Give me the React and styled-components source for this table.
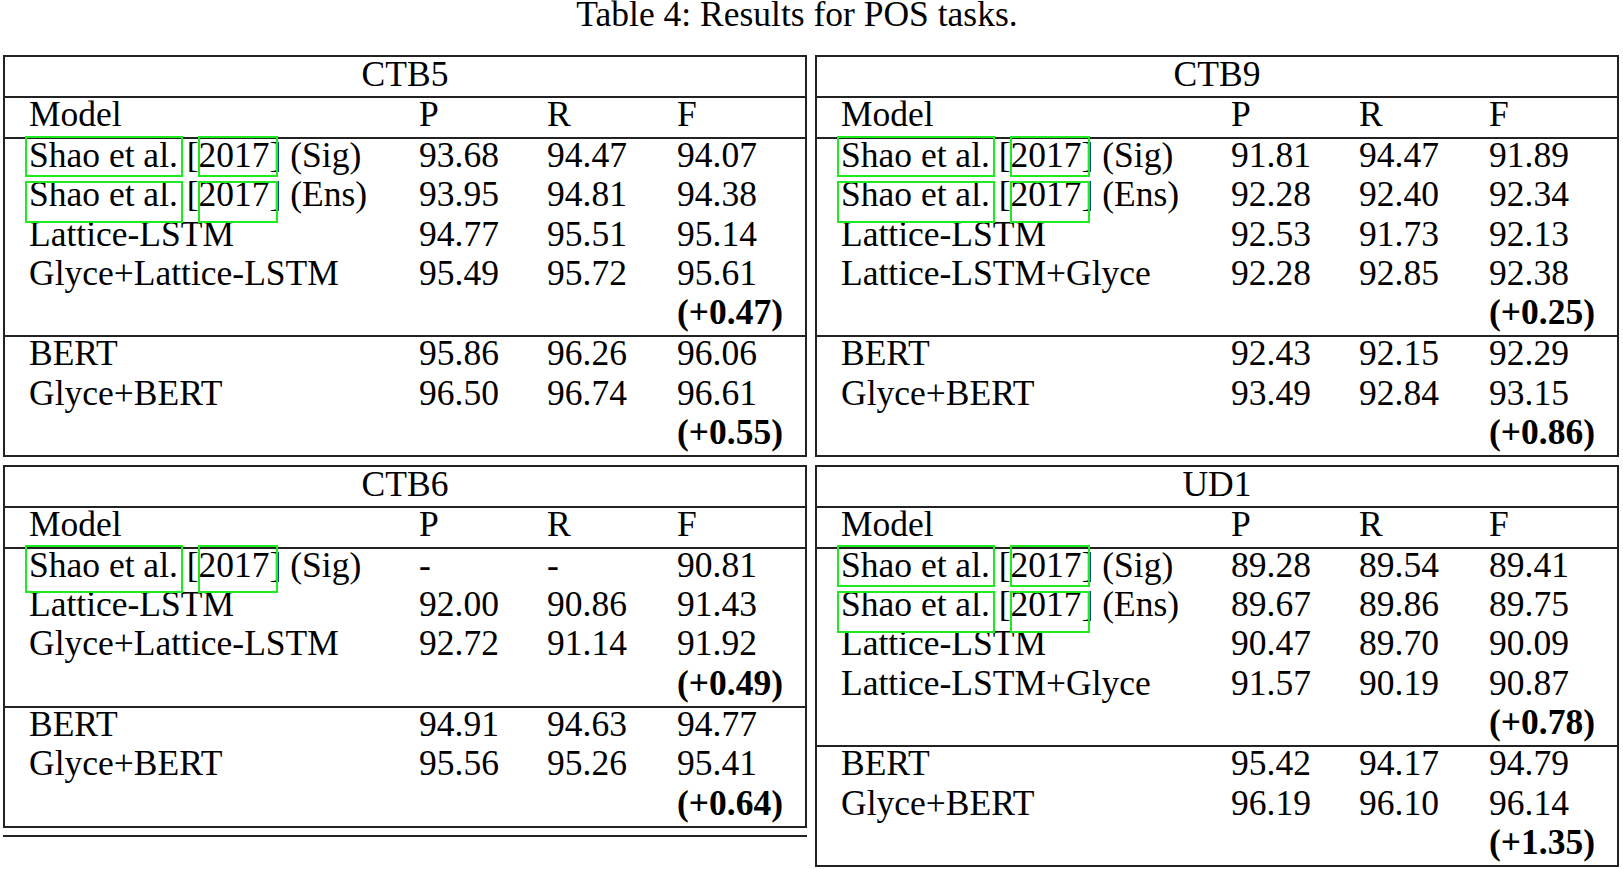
import styled, { createGlobalStyle, css } from 'styled-components';

const GlobalStyle = createGlobalStyle`
  body {
    margin: 0;
    background: #fff;
    color: #000;
    font-family: "Liberation Serif", "Times New Roman", serif;
  }
`;

// link annotation box offsets, relative to the inline content area
const linkRows = {
  first: { top: 0.5, bottom: -1.7 },
  second: { top: 6.9, bottom: -8.4 },
  single: { top: 0.5, bottom: -7.7 },
};
const linkSides = {
  name: { left: -4, right: -5.3 },
  year: { left: -0.5, right: -8.8 },
};

const tables = [
  {
    title: 'CTB5',
    groups: [
      [
        { cite: 'Sig', link: 'first', p: '93.68', r: '94.47', f: '94.07' },
        { cite: 'Ens', link: 'second', p: '93.95', r: '94.81', f: '94.38' },
        { model: 'Lattice-LSTM', p: '94.77', r: '95.51', f: '95.14' },
        { model: 'Glyce+Lattice-LSTM', p: '95.49', r: '95.72', f: '95.61' },
        { gain: '(+0.47)' },
      ],
      [
        { model: 'BERT', p: '95.86', r: '96.26', f: '96.06' },
        { model: 'Glyce+BERT', p: '96.50', r: '96.74', f: '96.61' },
        { gain: '(+0.55)' },
      ],
    ],
  },
  {
    title: 'CTB9',
    groups: [
      [
        { cite: 'Sig', link: 'first', p: '91.81', r: '94.47', f: '91.89' },
        { cite: 'Ens', link: 'second', p: '92.28', r: '92.40', f: '92.34' },
        { model: 'Lattice-LSTM', p: '92.53', r: '91.73', f: '92.13' },
        { model: 'Lattice-LSTM+Glyce', p: '92.28', r: '92.85', f: '92.38' },
        { gain: '(+0.25)' },
      ],
      [
        { model: 'BERT', p: '92.43', r: '92.15', f: '92.29' },
        { model: 'Glyce+BERT', p: '93.49', r: '92.84', f: '93.15' },
        { gain: '(+0.86)' },
      ],
    ],
  },
  {
    title: 'CTB6',
    rule: true,
    groups: [
      [
        { cite: 'Sig', link: 'single', p: '-', r: '-', f: '90.81' },
        { model: 'Lattice-LSTM', p: '92.00', r: '90.86', f: '91.43' },
        { model: 'Glyce+Lattice-LSTM', p: '92.72', r: '91.14', f: '91.92' },
        { gain: '(+0.49)' },
      ],
      [
        { model: 'BERT', p: '94.91', r: '94.63', f: '94.77' },
        { model: 'Glyce+BERT', p: '95.56', r: '95.26', f: '95.41' },
        { gain: '(+0.64)' },
      ],
    ],
  },
  {
    title: 'UD1',
    groups: [
      [
        { cite: 'Sig', link: 'first', p: '89.28', r: '89.54', f: '89.41' },
        { cite: 'Ens', link: 'second', p: '89.67', r: '89.86', f: '89.75' },
        { model: 'Lattice-LSTM', p: '90.47', r: '89.70', f: '90.09' },
        { model: 'Lattice-LSTM+Glyce', p: '91.57', r: '90.19', f: '90.87' },
        { gain: '(+0.78)' },
      ],
      [
        { model: 'BERT', p: '95.42', r: '94.17', f: '94.79' },
        { model: 'Glyce+BERT', p: '96.19', r: '96.10', f: '96.14' },
        { gain: '(+1.35)' },
      ],
    ],
  },
];

const ModelName = ({ row }) => {
  if (!row.cite) return row.model || '';
  return (
    <>
      <Link $row={row.link} $side="name">Shao et al.</Link> [
      <Link $row={row.link} $side="year">2017</Link>] ({row.cite})
    </>
  );
};

const ResultTable = ({ table }) => (
  <Block>
    <Box>
      <TitleRow>{table.title}</TitleRow>
      <Row $head>
        <Cell>Model</Cell>
        <Cell>P</Cell>
        <Cell>R</Cell>
        <Cell>F</Cell>
      </Row>
      {table.groups.map((group, gi) => (
        <Group key={gi} $first={gi === 0}>
          {group.map((row, ri) => (
            <Row key={ri}>
              <Cell><ModelName row={row} /></Cell>
              <Cell>{row.p}</Cell>
              <Cell>{row.r}</Cell>
              <Cell $bold={!!row.gain}>{row.gain || row.f}</Cell>
            </Row>
          ))}
        </Group>
      ))}
    </Box>
    {table.rule && <Rule />}
  </Block>
);

const App = () => (
  <Page>
    <GlobalStyle />
    <Caption>Table 4: Results for POS tasks.</Caption>
    <Grid>
      {tables.map((t) => (
        <ResultTable key={t.title} table={t} />
      ))}
    </Grid>
  </Page>
);

export default App;

const Page = styled.div`
  padding: 0 4px 0 3px;
  width: 1623px;
  box-sizing: border-box;
`;

const Caption = styled.div`
  font-size: 35.5px;
  line-height: 29.5px;
  text-align: center;
  padding-right: 28px;
  margin-bottom: 25.5px;
`;

const Grid = styled.div`
  display: grid;
  grid-template-columns: 804px 804px;
  column-gap: 8px;
  row-gap: 7.5px;
  align-items: start;
`;

const Block = styled.div`
  display: flex;
  flex-direction: column;
`;

const Box = styled.div`
  border: 2px solid #222;
  font-size: 35.5px;
`;

const TitleRow = styled.div`
  height: 39px;
  line-height: 34px;
  text-align: center;
  border-bottom: 2px solid #222;
`;

const Group = styled.div`
  ${({ $first }) =>
    !$first &&
    css`
      border-top: 2px solid #222;
    `}
`;

const Row = styled.div`
  display: grid;
  grid-template-columns: 390px 128px 130px 1fr;
  padding-left: 24px;
  height: ${({ $head }) => ($head ? '39px' : '39.3px')};
  line-height: ${({ $head }) => ($head ? '32px' : '32.8px')};
  ${({ $head }) =>
    $head &&
    css`
      border-bottom: 2px solid #222;
    `}
`;

const Cell = styled.div`
  white-space: nowrap;
  font-weight: ${({ $bold }) => ($bold ? 'bold' : 'normal')};
`;

const Link = styled.span`
  position: relative;

  &::after {
    content: '';
    position: absolute;
    top: ${({ $row }) => linkRows[$row].top}px;
    bottom: ${({ $row }) => linkRows[$row].bottom}px;
    left: ${({ $side }) => linkSides[$side].left}px;
    right: ${({ $side }) => linkSides[$side].right}px;
    border: 2px solid rgb(30, 235, 30);
    pointer-events: none;
  }
`;

const Rule = styled.div`
  margin-top: 7.5px;
  border-top: 2px solid #222;
`;
